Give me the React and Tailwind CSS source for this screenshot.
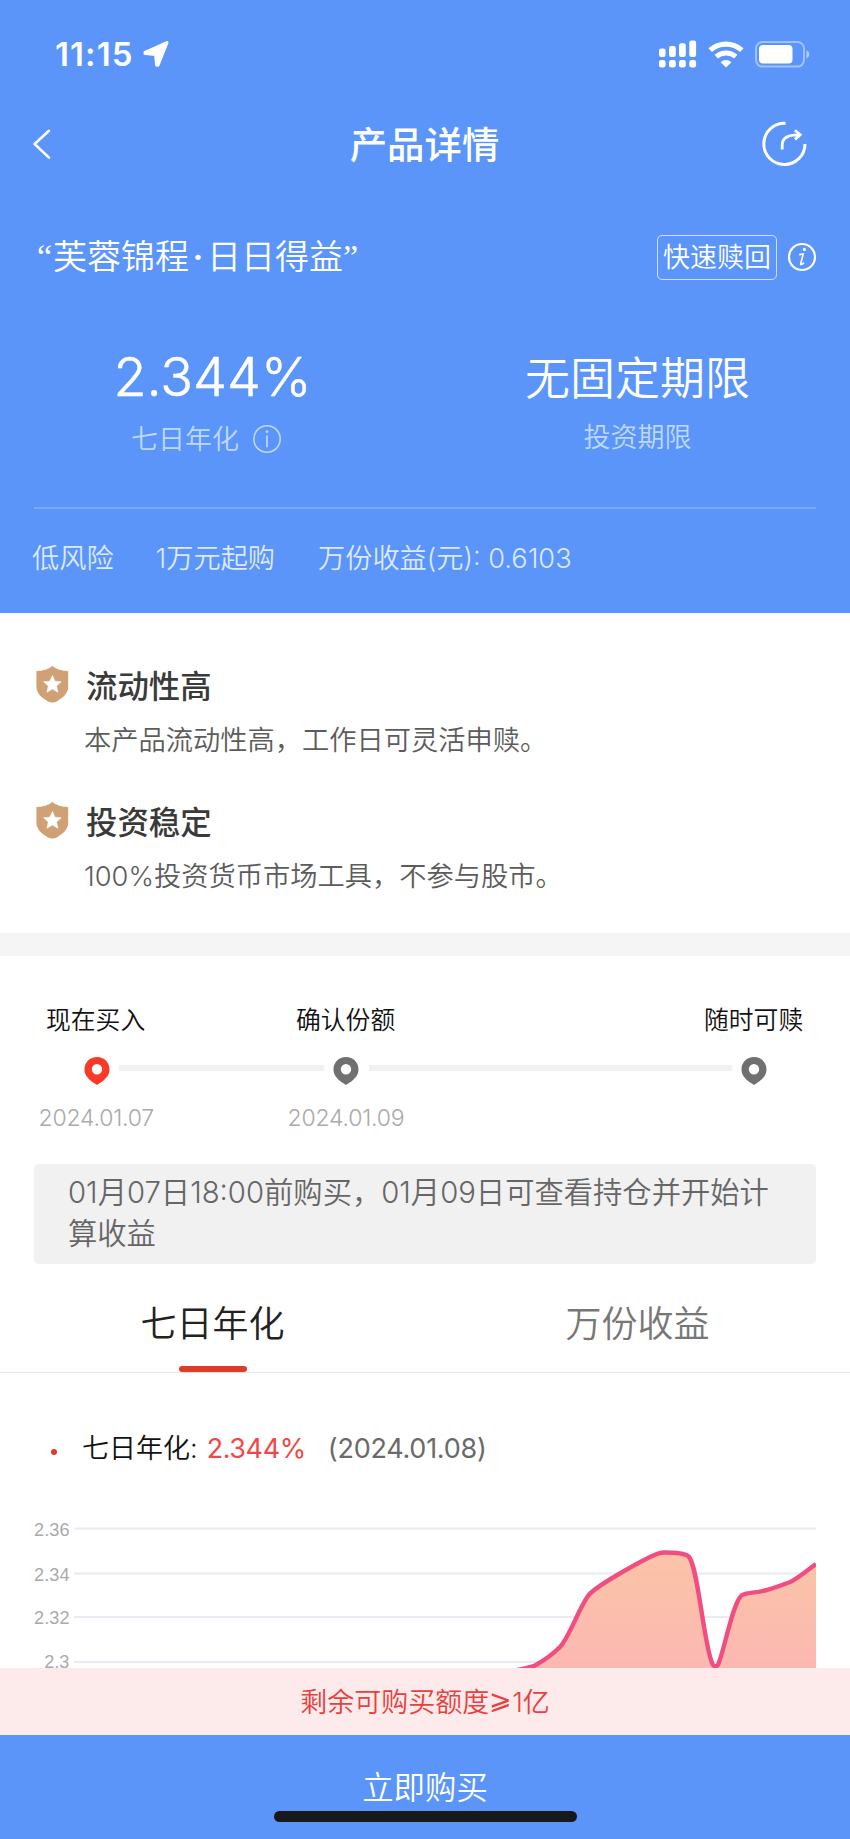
import React from "react";

function LocationArrow() {
  return (
    <svg width="28" height="28" viewBox="0 0 28 28" className="ml-[8px] shrink-0">
      <path d="M25 2.6 16 25.2H14.6L13.6 14.6 3 13.4V12.4Z" fill="#fff" stroke="#fff" strokeWidth="3" strokeLinejoin="round" />
    </svg>
  );
}

function CellularIcon() {
  return (
    <svg width="38" height="28" viewBox="0 0 38 28" fill="#fff">
      <rect x="0" y="8.5" width="6.6" height="8.5" rx="2.2" />
      <rect x="10" y="6" width="6.8" height="11" rx="2.2" />
      <rect x="20" y="3.3" width="6.8" height="13.7" rx="2.2" />
      <rect x="30.3" y="0.5" width="6.8" height="16.5" rx="2.2" />
      <rect x="0" y="20" width="6.6" height="7.6" rx="2.4" />
      <rect x="10" y="20" width="6.8" height="7.6" rx="2.4" />
      <rect x="20" y="20" width="6.8" height="7.6" rx="2.4" />
      <rect x="30.3" y="20" width="6.8" height="7.6" rx="2.4" />
    </svg>
  );
}

function WifiIcon() {
  return (
    <svg width="36" height="27" viewBox="0 0 36 27" fill="none">
      <path d="M2.2 9.2A23.5 23.5 0 0 1 33.8 9.2" stroke="#fff" strokeWidth="5.2" />
      <path d="M8.2 15.6A15 15 0 0 1 27.8 15.6" stroke="#fff" strokeWidth="5" />
      <path d="M18 26.4 12.6 21.2A8 8 0 0 1 23.4 21.2Z" fill="#fff" />
    </svg>
  );
}

function BatteryIcon() {
  return (
    <svg width="55" height="27" viewBox="0 0 55 27" fill="none">
      <rect x="1" y="1" width="48" height="24.6" rx="6.5" stroke="#fff" strokeOpacity=".42" strokeWidth="2" />
      <rect x="4" y="4" width="33.5" height="18.4" rx="4" fill="#fff" />
      <path d="M51.4 9.2C55.2 10.6 55.2 15.8 51.4 17.4Z" fill="#fff" fillOpacity=".5" />
    </svg>
  );
}

function BackIcon() {
  return (
    <svg width="20" height="32" viewBox="0 0 20 32" fill="none">
      <path d="M17 2.8 2.6 16 17 29.6" stroke="#fff" strokeWidth="2.6" strokeLinecap="round" strokeLinejoin="round" />
    </svg>
  );
}

function ShareIcon() {
  return (
    <svg width="46" height="46" viewBox="0 0 46 46" fill="none" stroke="#fff" strokeWidth="3">
      <path d="M24.6 2.4A20.6 20.6 0 1 0 44 23" />
      <path d="M21.2 28.4V24C21.2 17 26.5 13.6 38 13.8M34 9.2 39.2 13.8 34 18.4" strokeWidth="2.8" />
    </svg>
  );
}

function InfoItalic() {
  return (
    <svg width="30" height="30" viewBox="0 0 30 30" fill="none">
      <circle cx="15" cy="15" r="13" stroke="#fff" strokeWidth="2.2" />
      <circle cx="17.4" cy="7.4" r="1.6" fill="#fff" />
      <path d="M12.2 12.6 16.2 12 13.7 21.6C13.4 23.2 14.8 22.8 17 20.6" stroke="#fff" strokeWidth="1.6" />
    </svg>
  );
}

function InfoThin() {
  return (
    <svg width="30" height="30" viewBox="0 0 30 30" fill="none" className="ml-[13px]">
      <circle cx="15" cy="15" r="13.2" stroke="#bed9fe" strokeWidth="1.6" />
      <circle cx="15" cy="7.6" r="1.4" fill="#bed9fe" />
      <path d="M15 11.5V23.2" stroke="#bed9fe" strokeWidth="1.7" />
    </svg>
  );
}

function Shield() {
  return (
    <svg width="33" height="37" viewBox="0 0 33 37" className="mb-[4px] shrink-0">
      <path d="M16.4 0C20.4 3.2 26.4 5 32.2 5V20.5C32.2 28.5 25.4 32.6 20.8 35.4Q16.4 37.6 12 35.4C7.4 32.6.4 28.5.4 20.5V5C6.4 5 12.4 3.2 16.4 0Z" fill="#d1a176" />
      <path d="M16.4 9.5 18.9 15.2 25.2 15.8 20.5 20 21.9 26.2 16.4 23 10.9 26.2 12.3 20 7.6 15.8 13.9 15.2Z" fill="#fff" stroke="#fff" strokeWidth=".6" />
    </svg>
  );
}

function Pin({ color }) {
  return (
    <svg width="26" height="28" viewBox="0 0 26 28" className="shrink-0">
      <path fillRule="evenodd" fill={color} d="M13 0C20.2 0 25.5 5.4 25.5 12.4 25.5 19.2 20.2 23.3 13 28 5.8 23.3.5 19.2.5 12.4.5 5.4 5.8 0 13 0ZM13 7A5.2 5.2 0 1 0 13 17.4 5.2 5.2 0 1 0 13 7Z" />
    </svg>
  );
}

function Feature({ title, children }) {
  return (
    <div className="flex flex-col">
      <div className="flex h-[46px] items-center">
        <Shield />
        <h2 className="ml-[17px] pt-[4px] text-[31.4px] font-medium leading-none text-[#3a3a3a]">{title}</h2>
      </div>
      <p className="mt-[12px] flex h-[40px] items-center whitespace-nowrap pl-[48px] text-[27.25px] font-[350] leading-none text-[#5c5c5c]">{children}</p>
    </div>
  );
}

const gridRows = [
  { label: "2.36", y: 28.5 },
  { label: "2.34", y: 73.5 },
  { label: "2.32", y: 117 },
  { label: "2.3", y: 162 },
];

function YieldChart() {
  const curve =
    "M506 172C518 170 526 168.5 535 165.5C543 161 553 154 560 147C570 136 577 112 588 96C594 87 636 64 650 57C658 53 661 52.5 664 52.5C676 52.5 684 53 688 56C698 62 704 150 713 165Q715.5 167.5 718 165C724 152 733 101 742 95C746 92.5 758 92.5 763 91C775 88 782 85 790 82C797 79 806 71 816 64";
  return (
    <svg width="850" height="168" viewBox="0 0 850 168" className="block">
      <defs>
        <linearGradient id="yieldFill" x1="0" y1="52" x2="0" y2="168" gradientUnits="userSpaceOnUse">
          <stop offset="0" stopColor="#fbc0a0" stopOpacity=".94" />
          <stop offset="1" stopColor="#fbb4ae" stopOpacity=".94" />
        </linearGradient>
        <clipPath id="plot">
          <rect x="74" y="0" width="742" height="168" />
        </clipPath>
      </defs>
      {gridRows.map((row) => (
        <g key={row.label}>
          <path d={`M74 ${row.y}H816`} stroke="#e9ebf2" strokeWidth="2" />
          <text x="69.5" y={row.label === "2.3" ? 167.6 : row.y + 7} textAnchor="end" fill="#aaa" fontSize="18.2" fontFamily="Liberation Sans, sans-serif">
            {row.label}
          </text>
        </g>
      ))}
      <g clipPath="url(#plot)">
        <path d={`${curve}V180H506Z`} fill="url(#yieldFill)" />
        <path d={curve} fill="none" stroke="#f04e80" strokeWidth="4.4" strokeLinejoin="round" />
      </g>
    </svg>
  );
}

export default function App() {
  return (
    <div className="flex h-[1839px] w-[850px] flex-col overflow-hidden bg-white font-['Inter','Noto_Sans_CJK_SC',sans-serif] text-[#111]">
      <header className="flex h-[613px] shrink-0 flex-col bg-[#5b95fa] text-white">
        <div className="flex h-[108px] items-center pl-[55px] pr-[40px]">
          <span className="text-[33px] font-semibold leading-none tracking-[1.1px]">11:15</span>
          <LocationArrow />
          <div className="ml-auto flex items-center gap-[11px]">
            <CellularIcon />
            <WifiIcon />
            <BatteryIcon />
          </div>
        </div>
        <div className="grid h-[72px] grid-cols-3 items-center pl-[32px] pr-[43px]">
          <BackIcon />
          <h1 className="ml-[10px] whitespace-nowrap pt-[3px] text-center text-[37.4px] font-medium leading-none">产品详情</h1>
          <div className="justify-self-end"><ShareIcon /></div>
        </div>
        <div className="mt-[43px] flex h-[68px] items-center pl-[37px] pr-[33px]">
          <p className="flex items-center whitespace-nowrap text-[34px] font-[350] leading-none">
            <span className="w-[16px] font-['Liberation_Serif']">“</span>
            <span>芙蓉锦程</span>
            <span className="w-[18px] text-center font-semibold">·</span>
            <span>日日得益</span>
            <span className="font-['Liberation_Serif']">”</span>
          </p>
          <span className="ml-auto flex h-[45px] w-[120px] items-center justify-center whitespace-nowrap rounded-[5px] border border-white/70 text-[27px] font-[350] leading-none">快速赎回</span>
          <span className="ml-[10px]"><InfoItalic /></span>
        </div>
        <div className="mt-[50px] grid h-[118px] grid-cols-2">
          <div className="flex flex-col items-center">
            <span className="flex h-[72px] items-center text-[54px] font-light leading-none [-webkit-text-stroke:0.5px_white]">2.344%</span>
            <span className="flex h-[52px] items-center pr-[12px] text-[27px] font-[350] leading-none text-[#bed9fe]">七日年化<InfoThin /></span>
          </div>
          <div className="flex flex-col items-center">
            <span className="flex h-[72px] items-center pt-[2px] text-[45px] font-[350] leading-none">无固定期限</span>
            <span className="flex h-[48px] items-center text-[27px] font-[350] leading-none text-[#bed9fe]">投资期限</span>
          </div>
        </div>
        <div className="mx-[34px] mt-[48px] h-[2px] bg-[#7baafb]" />
        <div className="mt-[25px] flex h-[50px] items-center whitespace-nowrap pl-[32px] text-[27.2px] font-[350] leading-none text-[#dce9ff]">
          <span>低风险</span>
          <span className="ml-[42px]">1万元起购</span>
          <span className="ml-[43px]">万份收益(元): 0.6103</span>
        </div>
      </header>

      <section className="flex h-[320px] shrink-0 flex-col gap-[38px] pl-[36px] pt-[50px]">
        <Feature title="流动性高">本产品流动性高，工作日可灵活申赎。</Feature>
        <Feature title="投资稳定">100%投资货币市场工具，不参与股市。</Feature>
      </section>

      <div className="h-[23px] shrink-0 bg-[#f5f5f5]" />

      <section className="flex h-[208px] shrink-0 flex-col pt-[44px] leading-none">
        <div className="flex h-[40px] items-center whitespace-nowrap pl-[46px] pt-[1px] text-[24.8px] font-[350]">
          <span className="w-[250px]">现在买入</span>
          <span className="w-[408px]">确认份额</span>
          <span>随时可赎</span>
        </div>
        <div className="mt-[17px] flex h-[28px] items-center pl-[84px]">
          <Pin color="#fa3a26" />
          <div className="mx-[9px] mb-[6px] h-[6px] w-[205px] bg-[#f1f1f1]" />
          <Pin color="#707070" />
          <div className="ml-[10px] mr-[9px] mb-[6px] h-[6px] w-[363px] bg-[#f1f1f1]" />
          <Pin color="#707070" />
        </div>
        <div className="mt-[13px] flex h-[40px] items-center pl-[38.5px] text-[23px] font-[350] tracking-[-0.2px] text-[#aaa]">
          <span className="w-[249px]">2024.01.07</span>
          <span>2024.01.09</span>
        </div>
      </section>

      <p className="mx-[34px] h-[100px] shrink-0 rounded-[5px] bg-[#f1f1f1] px-[34px] pt-[9px] text-[29.3px] font-[350] leading-[40.5px] text-[#666]">
        01月07日18:00前购买，01月09日可查看持仓并开始计算收益
      </p>

      <nav className="grid h-[109px] shrink-0 grid-cols-2 border-b border-[#e8e8e8] text-[36px] leading-none">
        <div className="flex flex-col items-center justify-end text-[#222]">
          <span className="flex h-[60px] items-center font-[350]">七日年化</span>
          <span className="mt-[12px] h-[6px] w-[68px] rounded-full bg-[#e03c25]" />
        </div>
        <div className="flex flex-col items-center pt-[30px] font-[350] text-[#777]">
          <span className="flex h-[60px] items-center">万份收益</span>
        </div>
      </nav>

      <section className="flex h-[127px] shrink-0 items-center whitespace-nowrap pl-[51px] pt-[24px] text-[27px] font-[350] leading-none">
        <span className="mt-[6px] size-[6px] rounded-full bg-[#e03c25]" />
        <span className="ml-[25px]">七日年化:</span>
        <span className="ml-[9px] font-normal tracking-[-0.4px] text-[#f04848]">2.344%</span>
        <span className="ml-[22px] font-normal tracking-[-0.25px] text-[#6a6a6a]">(2024.01.08)</span>
      </section>

      <YieldChart />

      <div className="flex h-[67px] shrink-0 items-center justify-center bg-[#fdeaea] pt-[1px] text-[27px] font-[350] leading-none text-[#e84040]">
        <span>剩余可购买额度<span className="inline-block -translate-y-[3px]">⩾</span>1亿</span>
      </div>
      <footer className="flex h-[104px] shrink-0 flex-col items-center bg-[#5b95fa] pt-[27px] text-white">
        <button className="flex h-[49px] items-center pt-[4px] text-[31.4px] font-[350] leading-none">立即购买</button>
        <span className="h-[11px] w-[303px] rounded-full bg-[#17181a]" />
      </footer>
    </div>
  );
}
